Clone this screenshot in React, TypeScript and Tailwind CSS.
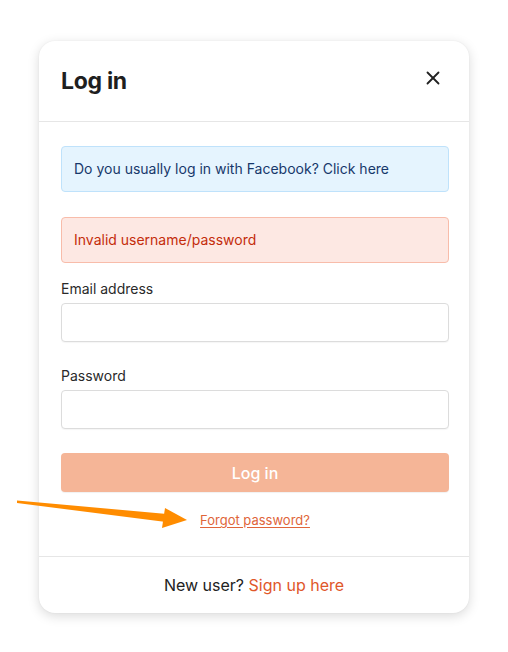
import React from 'react';
import { X } from 'lucide-react';

const App: React.FC = () => {
  return (
    <div className="relative min-h-screen bg-white font-['Inter',sans-serif] text-[#1d1d1f]">
      <div className="pt-[41px] pl-[39px]">
        <div className="w-[430px] rounded-[16px] bg-white shadow-[0_3px_12px_rgba(0,0,0,0.15),0_0_2px_rgba(0,0,0,0.06)]">
          {/* header */}
          <div className="flex h-[81px] items-center justify-between border-b border-[#e6e6e6] pl-[22px] pr-[25px]">
            <h1 className="text-[23px] font-bold tracking-[-0.3px] text-[#1f1f1f]">Log in</h1>
            <X className="mb-[7px] h-[22px] w-[22px] text-[#222]" strokeWidth={2} />
          </div>

          {/* body */}
          <div className="pl-[22px] pr-[20px] pt-[24px] pb-[27px]">
            <div className="rounded-[4px] border border-[#bfe2fb] bg-[#e5f4fe] px-[12px] py-[12px] text-[14px] leading-[20px] text-[#17386b]">
              Do you usually log in with Facebook? Click here
            </div>
            <div className="mt-[25px] rounded-[4px] border border-[#f8bcaa] bg-[#fde8e3] px-[12px] py-[12px] text-[14px] leading-[20px] text-[#c42c0b]">
              Invalid username/password
            </div>

            <label className="mt-[16px] block text-[14px] leading-[20px] text-[#2a2a2a]">Email address</label>
            <input className="mt-[4px] block h-[39px] w-full rounded-[4px] border border-[#dcdcdc] bg-white shadow-[0_1px_1px_rgba(0,0,0,0.04)]" />

            <label className="mt-[24px] block text-[14px] leading-[20px] text-[#2a2a2a]">Password</label>
            <input type="password" className="mt-[4px] block h-[39px] w-full rounded-[4px] border border-[#dcdcdc] bg-white shadow-[0_1px_1px_rgba(0,0,0,0.04)]" />

            <button className="mt-[24px] block h-[39px] w-full rounded-[4px] bg-[#f5b597] text-[16px] font-medium text-white shadow-[0_1px_1px_rgba(0,0,0,0.06)]">
              Log in
            </button>

            <div className="mt-[19px] text-center text-[13px] leading-[18px]">
              <a className="text-[#e0653a] underline underline-offset-[2px]">Forgot password?</a>
            </div>
          </div>

          {/* footer */}
          <div className="flex h-[57px] items-center justify-center border-t border-[#e6e6e6] text-[16px] text-[#222]">
            New user?&nbsp;<span className="text-[#e0572a]">Sign up here</span>
          </div>
        </div>
      </div>

      {/* annotation arrow */}
      <svg className="pointer-events-none absolute left-0 top-0" width="508" height="652">
        <polygon points="17,500.5 17,503 166,522 167,514" fill="#ff8c00" />
        <polygon points="187,520 165,508 162,528" fill="#ff8c00" />
      </svg>
    </div>
  );
};

export default App;
